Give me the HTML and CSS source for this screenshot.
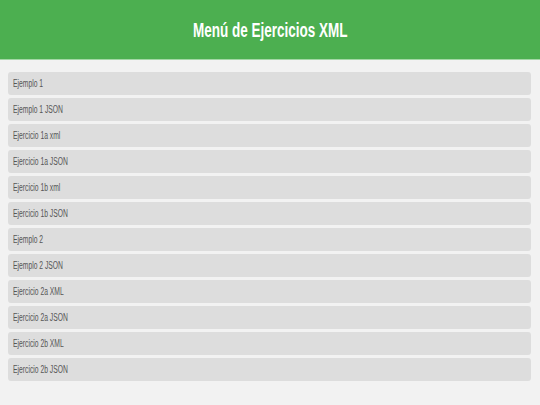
FILE: index.html
```html
<!DOCTYPE html>
<html lang="es">
<head>
<meta charset="utf-8">
<title>Menú de Ejercicios XML</title>
<link rel="stylesheet" href="styles.css">
</head>
<body>
<header class="topbar">
  <h1 class="title"><span class="narrow">Menú de Ejercicios XML</span></h1>
</header>
<nav class="menu">
  <a class="item" href="#"><span class="narrow">Ejemplo 1</span></a>
  <a class="item" href="#"><span class="narrow">Ejemplo 1 JSON</span></a>
  <a class="item" href="#"><span class="narrow">Ejercicio 1a xml</span></a>
  <a class="item" href="#"><span class="narrow">Ejercicio 1a JSON</span></a>
  <a class="item" href="#"><span class="narrow">Ejercicio 1b xml</span></a>
  <a class="item" href="#"><span class="narrow">Ejercicio 1b JSON</span></a>
  <a class="item" href="#"><span class="narrow">Ejemplo 2</span></a>
  <a class="item" href="#"><span class="narrow">Ejemplo 2 JSON</span></a>
  <a class="item" href="#"><span class="narrow">Ejercicio 2a XML</span></a>
  <a class="item" href="#"><span class="narrow">Ejercicio 2a JSON</span></a>
  <a class="item" href="#"><span class="narrow">Ejercicio 2b XML</span></a>
  <a class="item" href="#"><span class="narrow">Ejercicio 2b JSON</span></a>
</nav>
</body>
</html>
```
FILE: styles.css
```css
html, body {
  margin: 0;
  padding: 0;
  background: #f2f2f2;
  font-family: "Liberation Sans", Arial, sans-serif;
}

.topbar {
  height: 59px;
  background: #4caf50;
  border-bottom: 1px solid #a3d7a5;
  display: flex;
  align-items: center;
  justify-content: center;
}

.title {
  margin: 0;
  color: #ffffff;
  font-size: 20px;
  font-weight: bold;
  line-height: 1;
  width: 154px;
  white-space: nowrap;
}

.narrow {
  display: inline-block;
  transform: scaleX(0.675);
  transform-origin: left center;
  white-space: nowrap;
}

.menu {
  display: flex;
  flex-direction: column;
  gap: 3px;
  padding: 12px 9px 0 8px;
}

.item {
  display: flex;
  align-items: center;
  height: 23px;
  padding-left: 5px;
  background: #dddddd;
  border-radius: 3px;
  color: #555555;
  font-size: 10px;
  text-decoration: none;
}
```
